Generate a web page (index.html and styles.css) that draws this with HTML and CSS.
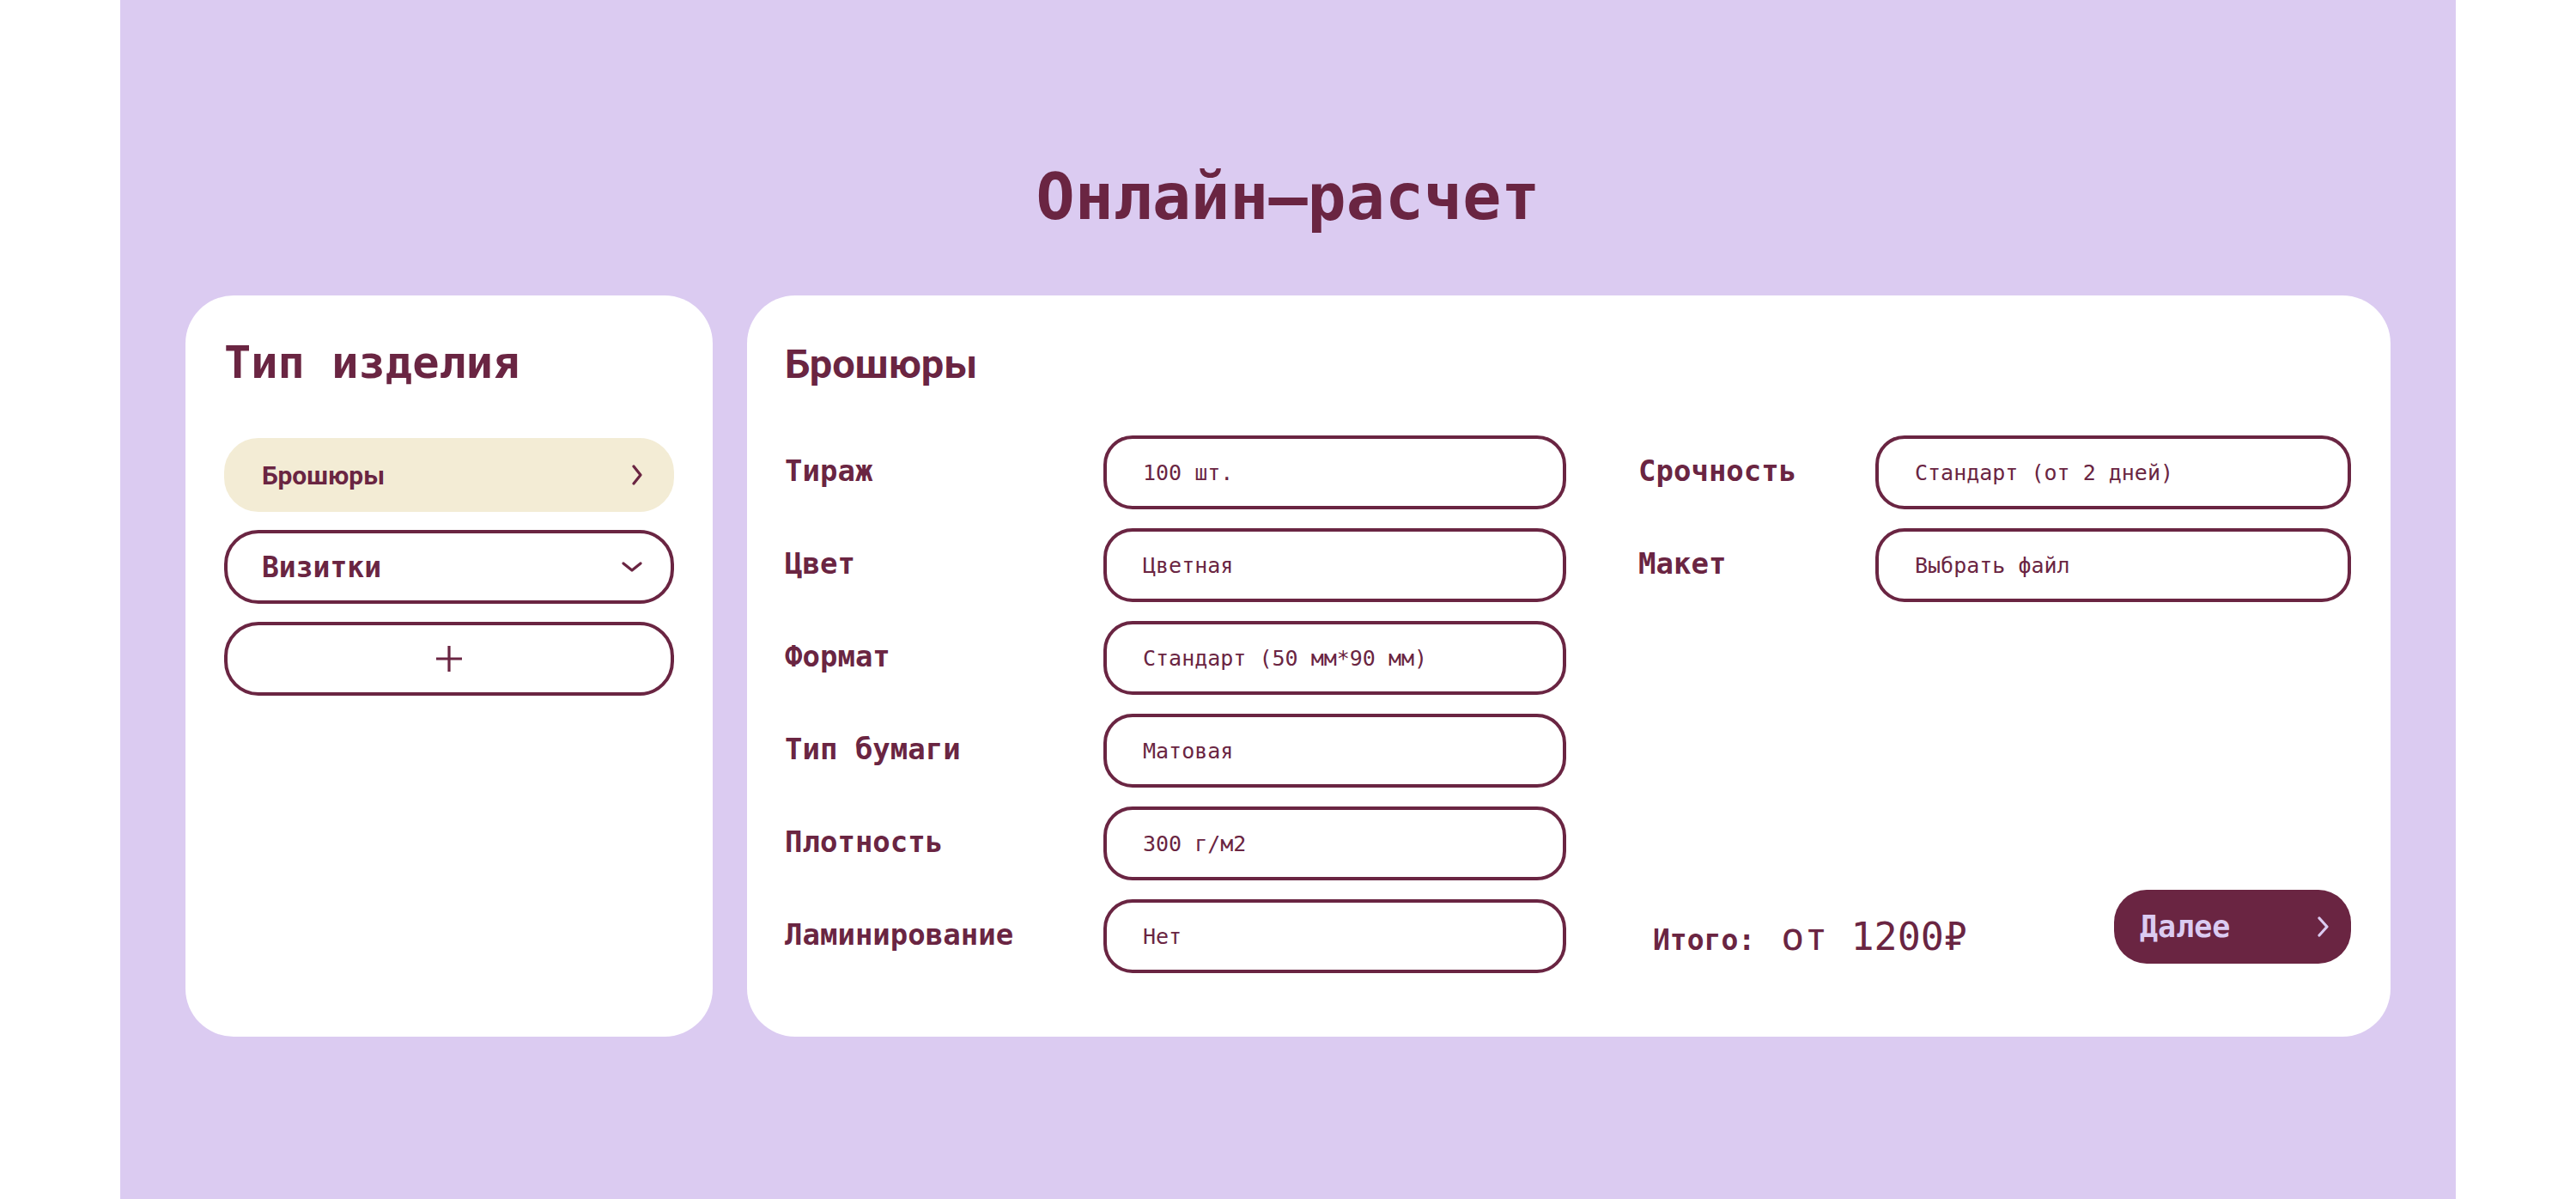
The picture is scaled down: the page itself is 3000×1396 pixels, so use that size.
FILE: index.html
```html
<!DOCTYPE html>
<html lang="ru">
  <head>
    <meta charset="UTF-8">
    <title>Онлайн-расчет</title>
    <link rel="stylesheet" href="styles.css">
  </head>
  <body>
    <section class="calc">
      <h1 class="calc-title">Онлайн–расчет</h1>

      <div class="calc-cards">
        <div class="card card-types">
          <h2 class="card-title">Тип изделия</h2>
          <ul class="type-list">
            <li class="type-item type-item-active">
              <span>Брошюры</span>
              <svg width="12" height="24" viewBox="0 0 12 24"><path d="M2 2 L10 12 L2 22" /></svg>
            </li>
            <li class="type-item">
              <span>Визитки</span>
              <svg width="24" height="12" viewBox="0 0 24 12"><path d="M2 2 L12 10 L22 2" /></svg>
            </li>
            <li class="type-item type-item-add">
              <svg width="30" height="30" viewBox="0 0 30 30"><path d="M15 0 V30 M0 15 H30" /></svg>
            </li>
          </ul>
        </div>

        <div class="card card-form">
          <h2 class="card-title card-title-sans">Брошюры</h2>
          <div class="form">
            <div class="form-col form-col-left">
              <div class="form-row"><span class="form-label">Тираж</span><div class="form-input">100 шт.</div></div>
              <div class="form-row"><span class="form-label">Цвет</span><div class="form-input">Цветная</div></div>
              <div class="form-row"><span class="form-label">Формат</span><div class="form-input">Стандарт (50 мм*90 мм)</div></div>
              <div class="form-row"><span class="form-label">Тип бумаги</span><div class="form-input">Матовая</div></div>
              <div class="form-row"><span class="form-label">Плотность</span><div class="form-input">300 г/м2</div></div>
              <div class="form-row"><span class="form-label">Ламинирование</span><div class="form-input">Нет</div></div>
            </div>
            <div class="form-col form-col-right">
              <div class="form-row"><span class="form-label">Срочность</span><div class="form-input">Стандарт (от 2 дней)</div></div>
              <div class="form-row"><span class="form-label">Макет</span><div class="form-input">Выбрать файл</div></div>
              <div class="total">
                <div class="total-text"><span class="total-label">Итого:</span><span class="total-sum">от 1200₽</span></div>
                <button class="next-btn">
                  <span>Далее</span>
                  <svg width="14" height="24" viewBox="0 0 14 24"><path d="M2 2 L11 12 L2 22" /></svg>
                </button>
              </div>
            </div>
          </div>
        </div>
      </div>
    </section>
  </body>
</html>
```

FILE: styles.css
```css
body {
  margin: 0;
  background-color: #fff;
  font-family: "DejaVu Sans Mono", "Liberation Mono", monospace;
  color: #6a2542;
}

.calc {
  width: 2720px;
  min-height: 100vh;
  margin: 0 auto;
  padding-top: 192px;
  box-sizing: border-box;
  background-color: #dbcbf1;
}

.calc-title {
  margin: 0;
  font-size: 75px;
  line-height: 75px;
  font-weight: bold;
  text-align: center;
}

.calc-cards {
  display: flex;
  gap: 40px;
  margin-top: 77px;
  padding: 0 76px;
}

.card {
  box-sizing: border-box;
  height: 863px;
  padding: 52px 46px 0 46px;
  background-color: #fff;
  border-radius: 56px;
}

.card-types {
  width: 614px;
  padding-left: 45px;
  padding-right: 45px;
}

.card-form {
  flex: 1;
  padding-left: 44px;
}

.card-title {
  margin: 0;
  font-size: 52px;
  line-height: 52px;
  font-weight: bold;
}

.card-title-sans {
  font-family: Roboto, "Liberation Sans", sans-serif;
  font-size: 47px;
  padding-top: 2px;
  height: 50px;
}

/* типы изделий */
.type-list {
  list-style: none;
  margin: 62px 0 0 0;
  padding: 0;
  display: flex;
  flex-direction: column;
  gap: 21px;
}

.type-item {
  box-sizing: border-box;
  height: 86px;
  display: flex;
  align-items: center;
  justify-content: space-between;
  padding: 0 33px 0 40px;
  border: 4px solid #6a2542;
  border-radius: 40px;
  font-size: 33px;
  font-weight: bold;
}

.type-item svg path,
.next-btn svg path {
  fill: none;
  stroke: #6a2542;
  stroke-width: 3.2;
  stroke-linecap: round;
  stroke-linejoin: round;
}

.type-item-active {
  border-color: #f3ecd5;
  background-color: #f3ecd5;
  font-family: Roboto, "Liberation Sans", sans-serif;
  font-size: 30px;
}

.type-item-add {
  justify-content: center;
  padding: 0;
}

.type-item-add svg path {
  stroke-linecap: butt;
}

/* форма */
.form {
  display: flex;
  gap: 84px;
  margin-top: 59px;
}

.form-col {
  display: flex;
  flex-direction: column;
  gap: 22px;
}

.form-col-left {
  width: 910px;
}

.form-col-right {
  flex: 1;
}

.form-row {
  display: flex;
  align-items: center;
  height: 86px;
}

.form-label {
  flex: 1;
  margin-top: -4px;
  font-size: 34px;
  font-weight: bold;
}

.form-input {
  box-sizing: border-box;
  width: 539px;
  height: 86px;
  display: flex;
  align-items: center;
  padding-left: 42px;
  border: 4px solid #6a2542;
  border-radius: 34px;
  font-size: 25px;
}

.form-col-right .form-input {
  width: 554px;
}

.total {
  display: flex;
  align-items: center;
  justify-content: space-between;
  height: 86px;
  margin-top: auto;
  padding-left: 17px;
}

.total-label {
  font-size: 33px;
  font-weight: bold;
}

.total-sum {
  margin-left: 30px;
  font-size: 45px;
}

.next-btn {
  box-sizing: border-box;
  width: 276px;
  height: 86px;
  margin-top: -22px;
  display: flex;
  align-items: center;
  justify-content: space-between;
  padding: 0 25px 0 30px;
  border: none;
  border-radius: 38px;
  background-color: #6a2542;
  color: #dbcbf1;
  font-family: "DejaVu Sans Mono", "Liberation Mono", monospace;
  font-size: 35px;
  font-weight: bold;
  cursor: pointer;
}

.next-btn svg path {
  stroke: #dbcbf1;
}
```
